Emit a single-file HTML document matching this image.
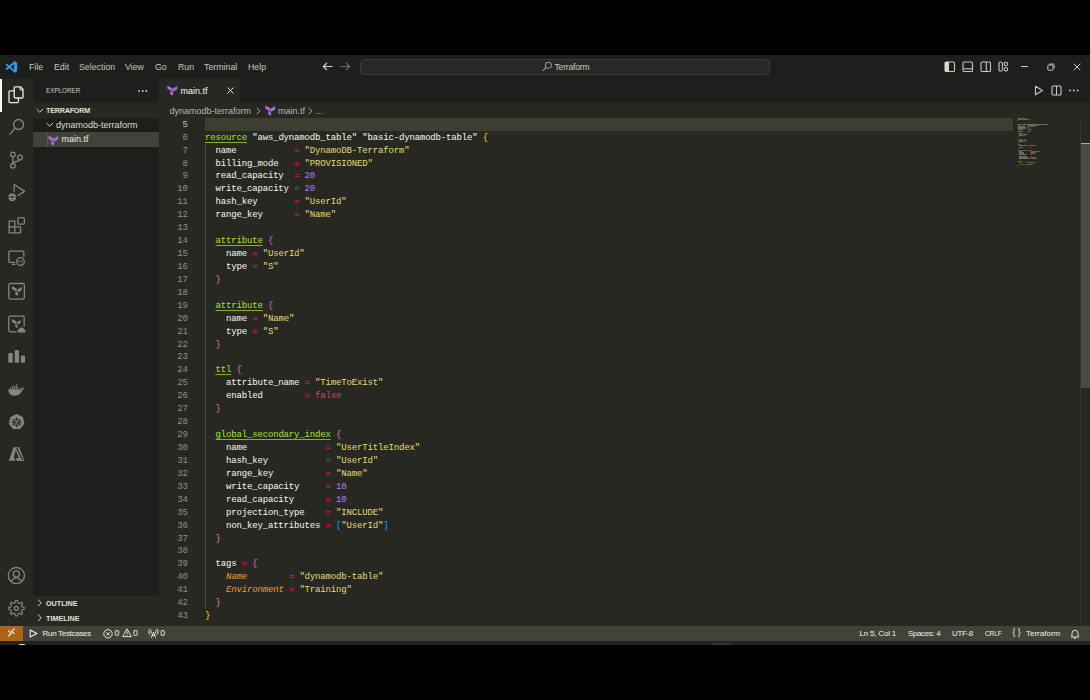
<!DOCTYPE html>
<html><head><meta charset="utf-8">
<style>
*{margin:0;padding:0;box-sizing:border-box}
html,body{width:1090px;height:700px;background:#000;overflow:hidden;font-family:"Liberation Sans",sans-serif}
.a{position:absolute}
svg{position:absolute;overflow:visible}
#title{left:0;top:55px;width:1090px;height:24px;background:#1e1f1c}
.menu{top:0;height:24px;line-height:24px;font-size:8.8px;color:#c4c4bf;white-space:nowrap}
#act{left:0;top:79px;width:33px;height:547px;background:#272822}
#side{left:33px;top:79px;width:126px;height:547px;background:#1e1f1c}
#tabs{left:159px;top:79px;width:931px;height:24px;background:#1e1f1c}
#tab{left:0;top:0;width:81px;height:24px;background:#272822}
#crumbs{left:159px;top:103px;width:931px;height:15px;background:#272822}
#editor{left:159px;top:118px;width:931px;height:508px;background:#272822;overflow:hidden}
#status{left:0;top:626px;width:1090px;height:15px;background:#414339}
#strip{left:0;top:641px;width:1090px;height:4px;background:#222320}
.ui{font-size:9px;color:#cccccc;white-space:nowrap}
.code{font-family:"Liberation Mono",monospace;font-size:9px;letter-spacing:-0.16px;white-space:pre;color:#f8f8f2}
.ln{position:absolute;left:0;width:29px;text-align:right;font-family:"Liberation Mono",monospace;font-size:9px;color:#90908a}
.l{position:absolute;left:46px;height:13px;line-height:13px}
.g{color:#a6e22e;text-decoration:underline;text-decoration-color:#84b42a;text-decoration-thickness:1px;text-underline-offset:2px}
.s{color:#e6db74}
.n{color:#ae81ff}
.p{color:#f92672}
.o{color:#fd971f;font-style:italic}
.b1{color:#ffd700}.b2{color:#da70d6}.b3{color:#179fff}
.ic{stroke:#85857f;fill:none;stroke-width:1.3}
.icf{fill:#85857f}
.sb{font-size:8px;color:#f0f0ea;white-space:nowrap;top:0;height:15px;line-height:15px}
</style></head><body>
<div id="title" class="a">
  <svg style="left:0;top:0" width="24" height="24" viewBox="0 0 24 24"><path d="M14.3 6.6L16.9 7.9V16L14.3 17.3Z" fill="#2f9fec" stroke="#2f9fec" stroke-width="0.6" stroke-linejoin="round"/><path d="M14.8 7.3L6.6 14M14.8 16.6L6.6 9.6" stroke="#2f9fec" stroke-width="1.8" stroke-linecap="round"/></svg>
  <div class="a menu" style="left:29px">File</div>
  <div class="a menu" style="left:54px">Edit</div>
  <div class="a menu" style="left:79px">Selection</div>
  <div class="a menu" style="left:125px">View</div>
  <div class="a menu" style="left:155px">Go</div>
  <div class="a menu" style="left:178px">Run</div>
  <div class="a menu" style="left:204px">Terminal</div>
  <div class="a menu" style="left:248px">Help</div>
  <!-- nav arrows -->
  <svg style="left:322px;top:7px" width="11" height="9" viewBox="0 0 11 9"><path d="M10.5 4.5H1.5M5 1L1.3 4.5L5 8" stroke="#d0d0cb" stroke-width="1.2" fill="none"/></svg>
  <svg style="left:340px;top:7px" width="11" height="9" viewBox="0 0 11 9"><path d="M0.5 4.5H9.5M6 1L9.7 4.5L6 8" stroke="#6b6b66" stroke-width="1.2" fill="none"/></svg>
  <div class="a" style="left:360px;top:4px;width:410px;height:16px;border:1px solid #3b3b38;border-radius:4px;background:#282826"></div>
  <svg style="left:542px;top:6px" width="11" height="11" viewBox="0 0 11 11"><circle cx="6.4" cy="4.3" r="3.1" stroke="#a5a5a0" stroke-width="1" fill="none"/><path d="M4.1 6.6L0.8 9.9" stroke="#a5a5a0" stroke-width="1.1"/></svg>
  <div class="a" style="left:554.5px;top:0;height:24px;line-height:24px;font-size:8.6px;letter-spacing:-0.2px;color:#c8c8c3">Terraform</div>
  <!-- layout icons -->
  <svg style="left:944px;top:6px" width="11" height="11" viewBox="0 0 11 11"><rect x="1" y="1" width="9.5" height="9.5" rx="1" stroke="#c5c5c0" stroke-width="1.1" fill="none"/><rect x="1" y="1" width="4" height="9.5" fill="#d8d8d3"/></svg>
  <svg style="left:962px;top:6px" width="11" height="11" viewBox="0 0 11 11"><rect x="1" y="1" width="9.5" height="9.5" rx="1" stroke="#c5c5c0" stroke-width="1.1" fill="none"/><path d="M1 7.8H10.5" stroke="#c5c5c0" stroke-width="1.1"/></svg>
  <svg style="left:980px;top:6px" width="11" height="11" viewBox="0 0 11 11"><rect x="1" y="1" width="9.5" height="9.5" rx="1" stroke="#c5c5c0" stroke-width="1.1" fill="none"/><path d="M6.3 1V10.5" stroke="#c5c5c0" stroke-width="1.1"/></svg>
  <svg style="left:998px;top:6px" width="11" height="11" viewBox="0 0 11 11"><rect x="1" y="1" width="3.4" height="9" rx="1.2" stroke="#c5c5c0" stroke-width="1.1" fill="none"/><circle cx="7.9" cy="3" r="1.8" stroke="#c5c5c0" stroke-width="1.1" fill="none"/><circle cx="7.9" cy="8.3" r="1.8" stroke="#c5c5c0" stroke-width="1.1" fill="none"/></svg>
  <!-- window controls -->
  <div class="a" style="left:1021px;top:11px;width:7px;height:1px;background:#c8c8c3"></div>
  <svg style="left:1047px;top:8px" width="8" height="8" viewBox="0 0 8 8"><rect x="0.8" y="2" width="5.2" height="5.2" rx="1" stroke="#c8c8c3" stroke-width="1" fill="none"/><path d="M2.5 1H6A1.5 1.5 0 0 1 7.3 2.3V5.5" stroke="#c8c8c3" stroke-width="0.9" fill="none"/></svg>
  <svg style="left:1073px;top:8px" width="8" height="8" viewBox="0 0 8 8"><path d="M0.7 0.7L7.3 7.3M7.3 0.7L0.7 7.3" stroke="#c8c8c3" stroke-width="1"/></svg>
</div>

<div id="act" class="a">
  <div class="a" style="left:0;top:0;width:1.5px;height:33px;background:#f8f8f2"></div>
  <!-- explorer (y0=82) -->
  <svg style="left:4px;top:3px" width="25" height="25" viewBox="0 0 25 25"><path d="M10.3 4.8H16.6L19 7.2V15A1 1 0 0 1 18 16H11.2A1 1 0 0 1 10.2 15V5.8A1 1 0 0 1 11.2 4.8Z" stroke="#e8e8e2" stroke-width="1.3" fill="none"/><path d="M10.2 8.8H6A1 1 0 0 0 5 9.8V19.6A1 1 0 0 0 6 20.6H13.4A1 1 0 0 0 14.4 19.6V16" stroke="#e8e8e2" stroke-width="1.3" fill="none"/><path d="M16 5V7.8H19" stroke="#e8e8e2" stroke-width="1" fill="none"/></svg>
  <!-- search y0=112 -->
  <svg style="left:4px;top:33px" width="25" height="25" viewBox="0 0 25 25"><circle cx="14.6" cy="12.5" r="5" class="ic"/><path d="M11 16.3L5.5 22.6" class="ic" stroke-width="1.4"/></svg>
  <!-- scm y0=147 -->
  <svg style="left:4px;top:68px" width="25" height="25" viewBox="0 0 25 25"><circle cx="8.9" cy="7.4" r="2.3" class="ic"/><circle cx="16" cy="10.5" r="2.3" class="ic"/><circle cx="8.9" cy="18.8" r="2.3" class="ic"/><path d="M8.9 9.7V16.5M15.6 12.8C15 14.6 13 14.6 11 14.8C9.6 15 8.9 15.6 8.9 16.4" class="ic"/></svg>
  <!-- debug y0=176 -->
  <svg style="left:4px;top:97px" width="25" height="25" viewBox="0 0 25 25"><path d="M10.2 15.8V8.5L20.5 15.4L13.5 19.8" class="ic" stroke-width="1.4" stroke-linejoin="round"/><ellipse cx="8.3" cy="21.5" rx="2.6" ry="3" class="ic" stroke-width="1.3"/><path d="M4.5 19.5H12M4.5 22.5H12M6.5 17.5L7.3 18.6M10.1 17.5L9.3 18.6" class="ic" stroke-width="1"/></svg>
  <!-- extensions y0=213 -->
  <svg style="left:4px;top:134px" width="25" height="25" viewBox="0 0 25 25"><path d="M5.1 8.1H10.8V19.8H5.1ZM5.1 13.9H16.6V19.8H10.8" class="ic" stroke-linejoin="round"/><rect x="13.8" y="4.6" width="6.6" height="6.6" rx="1.2" class="ic"/></svg>
  <!-- remote y0=246 -->
  <svg style="left:4px;top:167px" width="25" height="25" viewBox="0 0 25 25"><path d="M11 16.3H5.7A0.8 0.8 0 0 1 4.9 15.5V6A0.8 0.8 0 0 1 5.7 5.2H19A0.8 0.8 0 0 1 19.8 6V10.8M7.8 18.4H11.4" class="ic"/><circle cx="16.5" cy="15.5" r="3.8" class="ic"/><path d="M15 14.5L14.3 16.2M18 14.5L17.3 16.5" class="ic" stroke-width="0.9"/></svg>
  <!-- terraform y0=279 -->
  <svg style="left:4px;top:200px" width="25" height="25" viewBox="0 0 25 25"><rect x="4.8" y="4.5" width="15.6" height="15.6" rx="1.8" class="ic" stroke-width="1.2"/><path class="icf" d="M8 7L12.8 9.8V12.8L8 10Z M13.7 10.3L17.7 8V11.2L13.7 13.4Z M11.4 12.4L14 13.9V17L11.4 15.5Z"/></svg>
  <!-- terraform cloud y0=312 -->
  <svg style="left:4px;top:233px" width="25" height="25" viewBox="0 0 25 25"><path d="M12.6 19.8H6.3A1.5 1.5 0 0 1 4.8 18.3V5.7A1.5 1.5 0 0 1 6.3 4.2H18.7A1.5 1.5 0 0 1 20.2 5.7V14.8" class="ic" stroke-width="1.2"/><path class="icf" d="M8 7L12.5 9.6V12.5L8 9.9Z M13.3 10L16.6 8.1V10.9L13.3 12.8Z M11.3 12.1L13.6 13.5V16.2L11.3 14.8Z"/><path class="icf" d="M14.3 20.6A2 2 0 0 1 15.2 17A2.8 2.8 0 0 1 20.3 17.4A1.7 1.7 0 0 1 20.6 20.6Z"/></svg>
  <!-- bars y0=344 -->
  <svg style="left:4px;top:265px" width="25" height="25" viewBox="0 0 25 25"><rect x="4.3" y="9.1" width="4.4" height="9.7" rx="1.2" class="icf"/><rect x="10.7" y="6" width="4.3" height="12.8" rx="1.2" class="icf"/><rect x="16.8" y="11.4" width="4.2" height="7.4" rx="1.2" class="icf"/></svg>
  <!-- docker y0=377 -->
  <svg style="left:4px;top:298px" width="25" height="25" viewBox="0 0 25 25"><path class="icf" d="M4.3 12.3H17.6C17.8 11.3 17.6 10.3 17.3 9.5C17.9 9.7 18.6 10.4 19 11.3C19.7 11.2 20.3 11.5 20.8 11.7C20.3 12.4 19.4 12.7 18.7 12.6C17.5 16.3 14.5 18.7 10.2 18.7C6.4 18.7 4.5 16.2 4.3 12.3Z"/><path class="icf" d="M5.9 10.6H7.3V11.8H5.9ZM7.9 10.6H9.3V11.8H7.9ZM9.9 10.6H11.3V11.8H9.9ZM11.9 10.6H13.3V11.8H11.9ZM13.9 10.6H15.3V11.8H13.9ZM7.9 9H9.3V10.2H7.9ZM9.9 9H11.3V10.2H9.9ZM11.9 9H13.3V10.2H11.9ZM11.9 7.3H13.3V8.6H11.9Z"/></svg>
  <!-- k8s y0=410 -->
  <svg style="left:4px;top:331px" width="25" height="25" viewBox="0 0 25 25"><path class="icf" d="M12.6 4.1L18.8 7.1L20.4 13.7L16.1 19.1H9.1L4.8 13.7L6.4 7.1Z"/><g stroke="#272822" stroke-width="0.9" fill="none"><circle cx="12.6" cy="12.3" r="3.3"/><path d="M12.6 7.2V17.4M8.2 9.5L17 15.1M17 9.5L8.2 15.1M7.4 12.3H17.8"/></g><circle cx="12.6" cy="12.3" r="1" class="icf"/></svg>
  <!-- azure y0=442 -->
  <svg style="left:4px;top:363px" width="25" height="25" viewBox="0 0 25 25"><path class="icf" d="M9.4 5.2H12.8L9.9 14.8L11.5 18.8H4.9Z"/><path class="icf" d="M12 5.2H15.2L20.6 19H12.9L11.7 16.2H14.8L12 8.3Z"/><path d="M12.6 5.8L18.7 18.2" stroke="#272822" stroke-width="1.2"/></svg>
  <!-- account y0=563 -->
  <svg style="left:4px;top:484px" width="25" height="25" viewBox="0 0 25 25"><circle cx="12.4" cy="12.6" r="8.1" class="ic" stroke-width="1.2"/><circle cx="12.4" cy="11" r="3.1" class="ic" stroke-width="1.2"/><path d="M7.4 18.6C8.5 16 10.2 14.8 12.4 14.8C14.6 14.8 16.3 16 17.4 18.6" class="ic" stroke-width="1.2"/></svg>
  <!-- gear y0=596 -->
  <svg style="left:4px;top:517px" width="25" height="25" viewBox="0 0 25 25"><path class="ic" stroke-width="1.2" stroke-linejoin="round" d="M11.3 4.6H13.6L14.1 7.2L15.8 7.9L18 6.4L19.6 8L18.1 10.2L18.8 11.9L21.4 12.4V14.6L18.8 15.1L18.1 16.8L19.6 19L18 20.6L15.8 19.1L14.1 19.8L13.6 22.4H11.3L10.8 19.8L9.1 19.1L6.9 20.6L5.3 19L6.8 16.8L6.1 15.1L3.5 14.6V12.4L6.1 11.9L6.8 10.2L5.3 8L6.9 6.4L9.1 7.9L10.8 7.2Z" transform="translate(12.45,12.3) scale(0.87) translate(-12.45,-13.5)"/><circle cx="12.4" cy="12.3" r="2" class="ic" stroke-width="1.2"/></svg>
</div>

<div id="side" class="a">
  <div class="a" style="left:13px;top:0;height:24px;line-height:24px;font-size:8px;color:#c8c8c3;transform:scaleX(0.8);transform-origin:0 0;letter-spacing:-0.1px">EXPLORER</div>
  <svg style="left:105px;top:11px" width="10" height="2" viewBox="0 0 10 2"><circle cx="1" cy="1" r="0.9" fill="#d0d0cb"/><circle cx="4.7" cy="1" r="0.9" fill="#d0d0cb"/><circle cx="8.4" cy="1" r="0.9" fill="#d0d0cb"/></svg>
  <div class="a" style="left:0;top:24px;width:126px;height:15px;background:#272822"></div>
  <svg style="left:3px;top:29px" width="8" height="6" viewBox="0 0 8 6"><path d="M0.6 1L3.8 4.2L7 1" stroke="#d0d0cb" stroke-width="1" fill="none"/></svg>
  <div class="a" style="left:12.8px;top:24px;height:15px;line-height:15px;font-size:7.8px;font-weight:bold;color:#e0e0da;letter-spacing:-0.25px;transform:scaleX(0.923);transform-origin:0 0">TERRAFORM</div>
  <svg style="left:12.5px;top:43px" width="8" height="6" viewBox="0 0 8 6"><path d="M0.6 1L3.8 4.2L7 1" stroke="#d0d0cb" stroke-width="1" fill="none"/></svg>
  <div class="a" style="left:23px;top:39px;height:14px;line-height:14px;font-size:9px;color:#dcdcd6">dynamodb-terraform</div>
  <div class="a" style="left:0;top:53px;width:126px;height:15px;background:#414339"></div>
  <div class="a" style="left:13.5px;top:53px;width:1px;height:15px;background:#585850"></div>
  <svg style="left:14.5px;top:56px" width="11" height="11" viewBox="0 0 11 11"><path fill="#a66bd9" d="M0.4 0.4L5.5 3.3V6.6L0.4 3.7Z M5.8 3.5L10.2 1V4.4L5.8 6.9Z M3.2 5.8L6.1 7.4V10.8L3.2 9.2Z"/></svg>
  <div class="a" style="left:28.5px;top:53px;height:15px;line-height:15px;font-size:9px;color:#f0f0ea">main.tf</div>
  <div class="a" style="left:0;top:516.5px;width:126px;height:30.5px;background:#272822"></div>
  <svg style="left:3.5px;top:520px" width="6" height="8" viewBox="0 0 6 8"><path d="M1 0.6L4.3 3.8L1 7" stroke="#d0d0cb" stroke-width="1" fill="none"/></svg>
  <div class="a" style="left:12.8px;top:516.5px;height:15px;line-height:15px;font-size:7.8px;font-weight:bold;color:#e0e0da;transform:scaleX(0.923);transform-origin:0 0">OUTLINE</div>
  <svg style="left:3.5px;top:535px" width="6" height="8" viewBox="0 0 6 8"><path d="M1 0.6L4.3 3.8L1 7" stroke="#d0d0cb" stroke-width="1" fill="none"/></svg>
  <div class="a" style="left:12.8px;top:531.5px;height:15px;line-height:15px;font-size:7.8px;font-weight:bold;color:#e0e0da;transform:scaleX(0.923);transform-origin:0 0">TIMELINE</div>
</div>

<div id="tabs" class="a">
  <div id="tab" class="a">
    <svg style="left:7.5px;top:6px" width="11" height="11" viewBox="0 0 11 11"><path fill="#a66bd9" d="M0.4 0.4L5.5 3.3V6.6L0.4 3.7Z M5.8 3.5L10.2 1V4.4L5.8 6.9Z M3.2 5.8L6.1 7.4V10.8L3.2 9.2Z"/></svg>
    <div class="a" style="left:21.5px;top:0;height:24px;line-height:24px;font-size:9px;color:#f8f8f2">main.tf</div>
    <svg style="left:68px;top:8px" width="7" height="7" viewBox="0 0 7 7"><path d="M0.5 0.5L6.5 6.5M6.5 0.5L0.5 6.5" stroke="#e8e8e2" stroke-width="1"/></svg>
  </div>
  <!-- right actions -->
  <svg style="left:875px;top:6px" width="10" height="11" viewBox="0 0 10 11"><path d="M1.5 1.2V9.8L8.5 5.5Z" stroke="#c8c8c3" stroke-width="1.1" fill="none" stroke-linejoin="round"/></svg>
  <svg style="left:892px;top:6px" width="11" height="11" viewBox="0 0 11 11"><rect x="1" y="1" width="9" height="9" rx="1" stroke="#c8c8c3" stroke-width="1.1" fill="none"/><path d="M5.5 1V10" stroke="#c8c8c3" stroke-width="1.1"/></svg>
  <svg style="left:910px;top:10px" width="10" height="3" viewBox="0 0 10 3"><circle cx="1" cy="1.5" r="0.9" fill="#c8c8c3"/><circle cx="4.8" cy="1.5" r="0.9" fill="#c8c8c3"/><circle cx="8.6" cy="1.5" r="0.9" fill="#c8c8c3"/></svg>
</div>

<div id="crumbs" class="a">
  <div class="a" style="left:10.5px;top:0.6px;height:15px;line-height:15px;font-size:9px;color:#b8b8b2">dynamodb-terraform</div>
  <svg style="left:97px;top:4px" width="5" height="8" viewBox="0 0 5 8"><path d="M0.7 0.8L3.9 4L0.7 7.2" stroke="#b8b8b2" stroke-width="0.9" fill="none"/></svg>
  <svg style="left:105.5px;top:2px" width="11" height="11" viewBox="0 0 11 11"><path fill="#a66bd9" d="M0.4 0.4L5.5 3.3V6.6L0.4 3.7Z M5.8 3.5L10.2 1V4.4L5.8 6.9Z M3.2 5.8L6.1 7.4V10.8L3.2 9.2Z"/></svg>
  <div class="a" style="left:119px;top:0.6px;height:15px;line-height:15px;font-size:9px;color:#b8b8b2">main.tf</div>
  <svg style="left:149px;top:4px" width="5" height="8" viewBox="0 0 5 8"><path d="M0.7 0.8L3.9 4L0.7 7.2" stroke="#b8b8b2" stroke-width="0.9" fill="none"/></svg>
  <div class="a" style="left:156.5px;top:0.6px;height:15px;line-height:15px;font-size:9px;color:#b8b8b2">...</div>
</div>

<div id="editor" class="a">
<div class="a" style="left:46px;top:0px;width:808px;height:13px;background:#3e3d32"></div>
<div class="a" style="left:46px;top:24.36px;width:1px;height:466.98px;background:#4a4a44"></div>
<div class="ln" style="top:0.75px;height:13px;line-height:13px;color:#c2c2bf">5</div>
<div class="ln" style="top:13.68px;height:13px;line-height:13px;color:#90908a">6</div>
<div class="l code" style="top:13.68px"><span class="g">resource</span> &quot;aws_dynamodb_table&quot; &quot;basic-dynamodb-table&quot; <span class="b1">{</span></div>
<div class="ln" style="top:26.61px;height:13px;line-height:13px;color:#90908a">7</div>
<div class="l code" style="top:26.61px">  name           <span class="p">=</span> <span class="s">&quot;DynamoDB-Terraform&quot;</span></div>
<div class="ln" style="top:39.54px;height:13px;line-height:13px;color:#90908a">8</div>
<div class="l code" style="top:39.54px">  billing_mode   <span class="p">=</span> <span class="s">&quot;PROVISIONED&quot;</span></div>
<div class="ln" style="top:52.47px;height:13px;line-height:13px;color:#90908a">9</div>
<div class="l code" style="top:52.47px">  read_capacity  <span class="p">=</span> <span class="n">20</span></div>
<div class="ln" style="top:65.40px;height:13px;line-height:13px;color:#90908a">10</div>
<div class="l code" style="top:65.40px">  write_capacity <span class="p">=</span> <span class="n">20</span></div>
<div class="ln" style="top:78.33px;height:13px;line-height:13px;color:#90908a">11</div>
<div class="l code" style="top:78.33px">  hash_key       <span class="p">=</span> <span class="s">&quot;UserId&quot;</span></div>
<div class="ln" style="top:91.26px;height:13px;line-height:13px;color:#90908a">12</div>
<div class="l code" style="top:91.26px">  range_key      <span class="p">=</span> <span class="s">&quot;Name&quot;</span></div>
<div class="ln" style="top:104.19px;height:13px;line-height:13px;color:#90908a">13</div>
<div class="ln" style="top:117.12px;height:13px;line-height:13px;color:#90908a">14</div>
<div class="l code" style="top:117.12px">  <span class="g">attribute</span> <span class="b2">{</span></div>
<div class="ln" style="top:130.05px;height:13px;line-height:13px;color:#90908a">15</div>
<div class="l code" style="top:130.05px">    name <span class="p">=</span> <span class="s">&quot;UserId&quot;</span></div>
<div class="ln" style="top:142.98px;height:13px;line-height:13px;color:#90908a">16</div>
<div class="l code" style="top:142.98px">    type <span class="p">=</span> <span class="s">&quot;S&quot;</span></div>
<div class="ln" style="top:155.91px;height:13px;line-height:13px;color:#90908a">17</div>
<div class="l code" style="top:155.91px">  <span class="b2">}</span></div>
<div class="ln" style="top:168.84px;height:13px;line-height:13px;color:#90908a">18</div>
<div class="ln" style="top:181.77px;height:13px;line-height:13px;color:#90908a">19</div>
<div class="l code" style="top:181.77px">  <span class="g">attribute</span> <span class="b2">{</span></div>
<div class="ln" style="top:194.70px;height:13px;line-height:13px;color:#90908a">20</div>
<div class="l code" style="top:194.70px">    name <span class="p">=</span> <span class="s">&quot;Name&quot;</span></div>
<div class="ln" style="top:207.63px;height:13px;line-height:13px;color:#90908a">21</div>
<div class="l code" style="top:207.63px">    type <span class="p">=</span> <span class="s">&quot;S&quot;</span></div>
<div class="ln" style="top:220.56px;height:13px;line-height:13px;color:#90908a">22</div>
<div class="l code" style="top:220.56px">  <span class="b2">}</span></div>
<div class="ln" style="top:233.49px;height:13px;line-height:13px;color:#90908a">23</div>
<div class="ln" style="top:246.42px;height:13px;line-height:13px;color:#90908a">24</div>
<div class="l code" style="top:246.42px">  <span class="g">ttl</span> <span class="b2">{</span></div>
<div class="ln" style="top:259.35px;height:13px;line-height:13px;color:#90908a">25</div>
<div class="l code" style="top:259.35px">    attribute_name <span class="p">=</span> <span class="s">&quot;TimeToExist&quot;</span></div>
<div class="ln" style="top:272.28px;height:13px;line-height:13px;color:#90908a">26</div>
<div class="l code" style="top:272.28px">    enabled        <span class="p">=</span> <span class="p">false</span></div>
<div class="ln" style="top:285.21px;height:13px;line-height:13px;color:#90908a">27</div>
<div class="l code" style="top:285.21px">  <span class="b2">}</span></div>
<div class="ln" style="top:298.14px;height:13px;line-height:13px;color:#90908a">28</div>
<div class="ln" style="top:311.07px;height:13px;line-height:13px;color:#90908a">29</div>
<div class="l code" style="top:311.07px">  <span class="g">global_secondary_index</span> <span class="b2">{</span></div>
<div class="ln" style="top:324.00px;height:13px;line-height:13px;color:#90908a">30</div>
<div class="l code" style="top:324.00px">    name               <span class="p">=</span> <span class="s">&quot;UserTitleIndex&quot;</span></div>
<div class="ln" style="top:336.93px;height:13px;line-height:13px;color:#90908a">31</div>
<div class="l code" style="top:336.93px">    hash_key           <span class="p">=</span> <span class="s">&quot;UserId&quot;</span></div>
<div class="ln" style="top:349.86px;height:13px;line-height:13px;color:#90908a">32</div>
<div class="l code" style="top:349.86px">    range_key          <span class="p">=</span> <span class="s">&quot;Name&quot;</span></div>
<div class="ln" style="top:362.79px;height:13px;line-height:13px;color:#90908a">33</div>
<div class="l code" style="top:362.79px">    write_capacity     <span class="p">=</span> <span class="n">10</span></div>
<div class="ln" style="top:375.72px;height:13px;line-height:13px;color:#90908a">34</div>
<div class="l code" style="top:375.72px">    read_capacity      <span class="p">=</span> <span class="n">10</span></div>
<div class="ln" style="top:388.65px;height:13px;line-height:13px;color:#90908a">35</div>
<div class="l code" style="top:388.65px">    projection_type    <span class="p">=</span> <span class="s">&quot;INCLUDE&quot;</span></div>
<div class="ln" style="top:401.58px;height:13px;line-height:13px;color:#90908a">36</div>
<div class="l code" style="top:401.58px">    non_key_attributes <span class="p">=</span> <span class="b3">[</span><span class="s">&quot;UserId&quot;</span><span class="b3">]</span></div>
<div class="ln" style="top:414.51px;height:13px;line-height:13px;color:#90908a">37</div>
<div class="l code" style="top:414.51px">  <span class="b2">}</span></div>
<div class="ln" style="top:427.44px;height:13px;line-height:13px;color:#90908a">38</div>
<div class="ln" style="top:440.37px;height:13px;line-height:13px;color:#90908a">39</div>
<div class="l code" style="top:440.37px">  tags <span class="p">=</span> <span class="b2">{</span></div>
<div class="ln" style="top:453.30px;height:13px;line-height:13px;color:#90908a">40</div>
<div class="l code" style="top:453.30px">    <span class="o">Name</span>        <span class="p">=</span> <span class="s">&quot;dynamodb-table&quot;</span></div>
<div class="ln" style="top:466.23px;height:13px;line-height:13px;color:#90908a">41</div>
<div class="l code" style="top:466.23px">    <span class="o">Environment</span> <span class="p">=</span> <span class="s">&quot;Training&quot;</span></div>
<div class="ln" style="top:479.16px;height:13px;line-height:13px;color:#90908a">42</div>
<div class="l code" style="top:479.16px">  <span class="b2">}</span></div>
<div class="ln" style="top:492.09px;height:13px;line-height:13px;color:#90908a">43</div>
<div class="l code" style="top:492.09px"><span class="b1">}</span></div>
  <!-- minimap placeholder -->
  <div class="a" style="left:858.00px;top:0.00px;width:4.56px;height:1px;background:#a6e22e;opacity:.32"></div>
<div class="a" style="left:863.13px;top:0.00px;width:2.85px;height:1px;background:#f8f8f2;opacity:.32"></div>
<div class="a" style="left:866.55px;top:0.00px;width:0.57px;height:1px;background:#ffd700;opacity:.32"></div>
<div class="a" style="left:859.14px;top:1.14px;width:3.42px;height:1px;background:#f8f8f2;opacity:.32"></div>
<div class="a" style="left:863.13px;top:1.14px;width:0.57px;height:1px;background:#f92672;opacity:.32"></div>
<div class="a" style="left:864.27px;top:1.14px;width:6.27px;height:1px;background:#e6db74;opacity:.32"></div>
<div class="a" style="left:858.00px;top:2.28px;width:0.57px;height:1px;background:#ffd700;opacity:.32"></div>
<div class="a" style="left:858.00px;top:5.70px;width:4.56px;height:1px;background:#a6e22e;opacity:.32"></div>
<div class="a" style="left:863.13px;top:5.70px;width:11.40px;height:1px;background:#f8f8f2;opacity:.32"></div>
<div class="a" style="left:875.10px;top:5.70px;width:12.54px;height:1px;background:#f8f8f2;opacity:.32"></div>
<div class="a" style="left:888.21px;top:5.70px;width:0.57px;height:1px;background:#ffd700;opacity:.32"></div>
<div class="a" style="left:859.14px;top:6.84px;width:2.28px;height:1px;background:#f8f8f2;opacity:.32"></div>
<div class="a" style="left:867.69px;top:6.84px;width:0.57px;height:1px;background:#f92672;opacity:.32"></div>
<div class="a" style="left:868.83px;top:6.84px;width:11.40px;height:1px;background:#e6db74;opacity:.32"></div>
<div class="a" style="left:859.14px;top:7.98px;width:6.84px;height:1px;background:#f8f8f2;opacity:.32"></div>
<div class="a" style="left:867.69px;top:7.98px;width:0.57px;height:1px;background:#f92672;opacity:.32"></div>
<div class="a" style="left:868.83px;top:7.98px;width:7.41px;height:1px;background:#e6db74;opacity:.32"></div>
<div class="a" style="left:859.14px;top:9.12px;width:7.41px;height:1px;background:#f8f8f2;opacity:.32"></div>
<div class="a" style="left:867.69px;top:9.12px;width:0.57px;height:1px;background:#f92672;opacity:.32"></div>
<div class="a" style="left:868.83px;top:9.12px;width:1.14px;height:1px;background:#ae81ff;opacity:.32"></div>
<div class="a" style="left:859.14px;top:10.26px;width:7.98px;height:1px;background:#f8f8f2;opacity:.32"></div>
<div class="a" style="left:867.69px;top:10.26px;width:0.57px;height:1px;background:#f92672;opacity:.32"></div>
<div class="a" style="left:868.83px;top:10.26px;width:1.14px;height:1px;background:#ae81ff;opacity:.32"></div>
<div class="a" style="left:859.14px;top:11.40px;width:4.56px;height:1px;background:#f8f8f2;opacity:.32"></div>
<div class="a" style="left:867.69px;top:11.40px;width:0.57px;height:1px;background:#f92672;opacity:.32"></div>
<div class="a" style="left:868.83px;top:11.40px;width:4.56px;height:1px;background:#e6db74;opacity:.32"></div>
<div class="a" style="left:859.14px;top:12.54px;width:5.13px;height:1px;background:#f8f8f2;opacity:.32"></div>
<div class="a" style="left:867.69px;top:12.54px;width:0.57px;height:1px;background:#f92672;opacity:.32"></div>
<div class="a" style="left:868.83px;top:12.54px;width:3.42px;height:1px;background:#e6db74;opacity:.32"></div>
<div class="a" style="left:859.14px;top:14.82px;width:5.13px;height:1px;background:#a6e22e;opacity:.32"></div>
<div class="a" style="left:864.84px;top:14.82px;width:0.57px;height:1px;background:#da70d6;opacity:.32"></div>
<div class="a" style="left:860.28px;top:15.96px;width:2.28px;height:1px;background:#f8f8f2;opacity:.32"></div>
<div class="a" style="left:863.13px;top:15.96px;width:0.57px;height:1px;background:#f92672;opacity:.32"></div>
<div class="a" style="left:864.27px;top:15.96px;width:4.56px;height:1px;background:#e6db74;opacity:.32"></div>
<div class="a" style="left:860.28px;top:17.10px;width:2.28px;height:1px;background:#f8f8f2;opacity:.32"></div>
<div class="a" style="left:863.13px;top:17.10px;width:0.57px;height:1px;background:#f92672;opacity:.32"></div>
<div class="a" style="left:864.27px;top:17.10px;width:1.71px;height:1px;background:#e6db74;opacity:.32"></div>
<div class="a" style="left:859.14px;top:18.24px;width:0.57px;height:1px;background:#da70d6;opacity:.32"></div>
<div class="a" style="left:859.14px;top:20.52px;width:5.13px;height:1px;background:#a6e22e;opacity:.32"></div>
<div class="a" style="left:864.84px;top:20.52px;width:0.57px;height:1px;background:#da70d6;opacity:.32"></div>
<div class="a" style="left:860.28px;top:21.66px;width:2.28px;height:1px;background:#f8f8f2;opacity:.32"></div>
<div class="a" style="left:863.13px;top:21.66px;width:0.57px;height:1px;background:#f92672;opacity:.32"></div>
<div class="a" style="left:864.27px;top:21.66px;width:3.42px;height:1px;background:#e6db74;opacity:.32"></div>
<div class="a" style="left:860.28px;top:22.80px;width:2.28px;height:1px;background:#f8f8f2;opacity:.32"></div>
<div class="a" style="left:863.13px;top:22.80px;width:0.57px;height:1px;background:#f92672;opacity:.32"></div>
<div class="a" style="left:864.27px;top:22.80px;width:1.71px;height:1px;background:#e6db74;opacity:.32"></div>
<div class="a" style="left:859.14px;top:23.94px;width:0.57px;height:1px;background:#da70d6;opacity:.32"></div>
<div class="a" style="left:859.14px;top:26.22px;width:1.71px;height:1px;background:#a6e22e;opacity:.32"></div>
<div class="a" style="left:861.42px;top:26.22px;width:0.57px;height:1px;background:#da70d6;opacity:.32"></div>
<div class="a" style="left:860.28px;top:27.36px;width:7.98px;height:1px;background:#f8f8f2;opacity:.32"></div>
<div class="a" style="left:868.83px;top:27.36px;width:0.57px;height:1px;background:#f92672;opacity:.32"></div>
<div class="a" style="left:869.97px;top:27.36px;width:7.41px;height:1px;background:#e6db74;opacity:.32"></div>
<div class="a" style="left:860.28px;top:28.50px;width:3.99px;height:1px;background:#f8f8f2;opacity:.32"></div>
<div class="a" style="left:868.83px;top:28.50px;width:0.57px;height:1px;background:#f92672;opacity:.32"></div>
<div class="a" style="left:869.97px;top:28.50px;width:2.85px;height:1px;background:#f92672;opacity:.32"></div>
<div class="a" style="left:859.14px;top:29.64px;width:0.57px;height:1px;background:#da70d6;opacity:.32"></div>
<div class="a" style="left:859.14px;top:31.92px;width:12.54px;height:1px;background:#a6e22e;opacity:.32"></div>
<div class="a" style="left:872.25px;top:31.92px;width:0.57px;height:1px;background:#da70d6;opacity:.32"></div>
<div class="a" style="left:860.28px;top:33.06px;width:2.28px;height:1px;background:#f8f8f2;opacity:.32"></div>
<div class="a" style="left:871.11px;top:33.06px;width:0.57px;height:1px;background:#f92672;opacity:.32"></div>
<div class="a" style="left:872.25px;top:33.06px;width:9.12px;height:1px;background:#e6db74;opacity:.32"></div>
<div class="a" style="left:860.28px;top:34.20px;width:4.56px;height:1px;background:#f8f8f2;opacity:.32"></div>
<div class="a" style="left:871.11px;top:34.20px;width:0.57px;height:1px;background:#f92672;opacity:.32"></div>
<div class="a" style="left:872.25px;top:34.20px;width:4.56px;height:1px;background:#e6db74;opacity:.32"></div>
<div class="a" style="left:860.28px;top:35.34px;width:5.13px;height:1px;background:#f8f8f2;opacity:.32"></div>
<div class="a" style="left:871.11px;top:35.34px;width:0.57px;height:1px;background:#f92672;opacity:.32"></div>
<div class="a" style="left:872.25px;top:35.34px;width:3.42px;height:1px;background:#e6db74;opacity:.32"></div>
<div class="a" style="left:860.28px;top:36.48px;width:7.98px;height:1px;background:#f8f8f2;opacity:.32"></div>
<div class="a" style="left:871.11px;top:36.48px;width:0.57px;height:1px;background:#f92672;opacity:.32"></div>
<div class="a" style="left:872.25px;top:36.48px;width:1.14px;height:1px;background:#ae81ff;opacity:.32"></div>
<div class="a" style="left:860.28px;top:37.62px;width:7.41px;height:1px;background:#f8f8f2;opacity:.32"></div>
<div class="a" style="left:871.11px;top:37.62px;width:0.57px;height:1px;background:#f92672;opacity:.32"></div>
<div class="a" style="left:872.25px;top:37.62px;width:1.14px;height:1px;background:#ae81ff;opacity:.32"></div>
<div class="a" style="left:860.28px;top:38.76px;width:8.55px;height:1px;background:#f8f8f2;opacity:.32"></div>
<div class="a" style="left:871.11px;top:38.76px;width:0.57px;height:1px;background:#f92672;opacity:.32"></div>
<div class="a" style="left:872.25px;top:38.76px;width:5.13px;height:1px;background:#e6db74;opacity:.32"></div>
<div class="a" style="left:860.28px;top:39.90px;width:10.26px;height:1px;background:#f8f8f2;opacity:.32"></div>
<div class="a" style="left:871.11px;top:39.90px;width:0.57px;height:1px;background:#f92672;opacity:.32"></div>
<div class="a" style="left:872.25px;top:39.90px;width:0.57px;height:1px;background:#179fff;opacity:.32"></div>
<div class="a" style="left:872.82px;top:39.90px;width:4.56px;height:1px;background:#e6db74;opacity:.32"></div>
<div class="a" style="left:877.38px;top:39.90px;width:0.57px;height:1px;background:#179fff;opacity:.32"></div>
<div class="a" style="left:859.14px;top:41.04px;width:0.57px;height:1px;background:#da70d6;opacity:.32"></div>
<div class="a" style="left:859.14px;top:43.32px;width:2.28px;height:1px;background:#f8f8f2;opacity:.32"></div>
<div class="a" style="left:861.99px;top:43.32px;width:0.57px;height:1px;background:#f92672;opacity:.32"></div>
<div class="a" style="left:863.13px;top:43.32px;width:0.57px;height:1px;background:#da70d6;opacity:.32"></div>
<div class="a" style="left:860.28px;top:44.46px;width:2.28px;height:1px;background:#fd971f;opacity:.32"></div>
<div class="a" style="left:867.12px;top:44.46px;width:0.57px;height:1px;background:#f92672;opacity:.32"></div>
<div class="a" style="left:868.26px;top:44.46px;width:9.12px;height:1px;background:#e6db74;opacity:.32"></div>
<div class="a" style="left:860.28px;top:45.60px;width:6.27px;height:1px;background:#fd971f;opacity:.32"></div>
<div class="a" style="left:867.12px;top:45.60px;width:0.57px;height:1px;background:#f92672;opacity:.32"></div>
<div class="a" style="left:868.26px;top:45.60px;width:5.70px;height:1px;background:#e6db74;opacity:.32"></div>
<div class="a" style="left:859.14px;top:46.74px;width:0.57px;height:1px;background:#da70d6;opacity:.32"></div>
<div class="a" style="left:858.00px;top:47.88px;width:0.57px;height:1px;background:#ffd700;opacity:.32"></div>
  <div class="a" style="left:921px;top:-1px;width:10px;height:509px;background:#272822;border-left:1px solid #34352f;border-top:1px solid #34352f"></div>
  <div class="a" style="left:922px;top:25px;width:9px;height:245px;background:#4a4a44"></div>
  <div class="a" style="left:922px;top:24.5px;width:9px;height:1px;background:#b0b0aa"></div>
</div>

<div id="status" class="a">
  <div class="a" style="left:0;top:0;width:23px;height:15px;background:#ac6218"></div>
  <svg style="left:7px;top:2px" width="9" height="10" viewBox="0 0 9 10"><path d="M7.6 0.4L4.6 3.5L7.6 5.9M1.2 2.5L4.2 5.4L1.2 8.4" stroke="#f0f0ea" stroke-width="1.1" fill="none"/></svg>
  <svg style="left:29px;top:2.5px" width="9" height="9" viewBox="0 0 9 9"><path d="M1.2 0.9V8.1L7.8 4.5Z" stroke="#f0f0ea" stroke-width="1.1" fill="none" stroke-linejoin="round"/></svg>
  <div class="a sb" style="left:42.5px;letter-spacing:-0.3px">Run Testcases</div>
  <svg style="left:102.5px;top:3px" width="10" height="10" viewBox="0 0 10 10"><circle cx="5" cy="4.8" r="4.2" stroke="#f0f0ea" stroke-width="0.9" fill="none"/><path d="M3.3 3.1L6.7 6.5M6.7 3.1L3.3 6.5" stroke="#f0f0ea" stroke-width="0.9"/></svg>
  <div class="a sb" style="left:114.6px;font-size:8.8px;top:0.3px">0</div>
  <svg style="left:121.5px;top:2px" width="10" height="10" viewBox="0 0 10 10"><path d="M5 0.8L9.3 8.6H0.7Z" stroke="#f0f0ea" stroke-width="0.9" fill="none" stroke-linejoin="round"/><path d="M5 3.5V6.2M5 7V7.8" stroke="#f0f0ea" stroke-width="0.9"/></svg>
  <div class="a sb" style="left:133px;font-size:8.8px;top:0.3px">0</div>
  <svg style="left:148px;top:2px" width="11" height="11" viewBox="0 0 11 11"><path d="M2.2 0.8A4.2 4.2 0 0 0 2.2 6.8M8.8 0.8A4.2 4.2 0 0 1 8.8 6.8M3.7 2.3A2.3 2.3 0 0 0 3.7 5.3M7.3 2.3A2.3 2.3 0 0 1 7.3 5.3M5.5 4.2L3.4 9.6M5.5 4.2L7.6 9.6M4.3 7.4H6.7" stroke="#f0f0ea" stroke-width="1" fill="none"/></svg>
  <div class="a sb" style="left:160.2px;font-size:8.8px;top:0.3px">0</div>
  <div class="a sb" style="left:859.5px;letter-spacing:-0.2px">Ln 5, Col 1</div>
  <div class="a sb" style="left:908px;letter-spacing:-0.37px">Spaces: 4</div>
  <div class="a sb" style="left:952px;letter-spacing:-0.35px">UTF-8</div>
  <div class="a sb" style="left:984.5px;transform:scaleX(0.8);transform-origin:0 0">CRLF</div>
  <div class="a sb" style="left:1012.5px;font-size:8.5px;top:-1px">{ }</div>
  <div class="a sb" style="left:1026px">Terraform</div>
  <svg style="left:1070px;top:3px" width="10" height="10" viewBox="0 0 10 10"><path d="M2 7.3V4.3A3 3 0 0 1 8 4.3V7.3L8.8 8H1.2Z M4 8.6A1 1 0 0 0 6 8.6" stroke="#f0f0ea" stroke-width="0.9" fill="none" stroke-linejoin="round"/></svg>
</div>
<div id="strip" class="a"></div>
<div class="a" style="left:711px;top:642.5px;width:21px;height:2.5px;background:#34352f;border-radius:2px 2px 0 0"></div>
<div class="a" style="left:19px;top:643.5px;width:6px;height:1.5px;background:#e8d8c8;border-radius:1px"></div>
</body></html>
